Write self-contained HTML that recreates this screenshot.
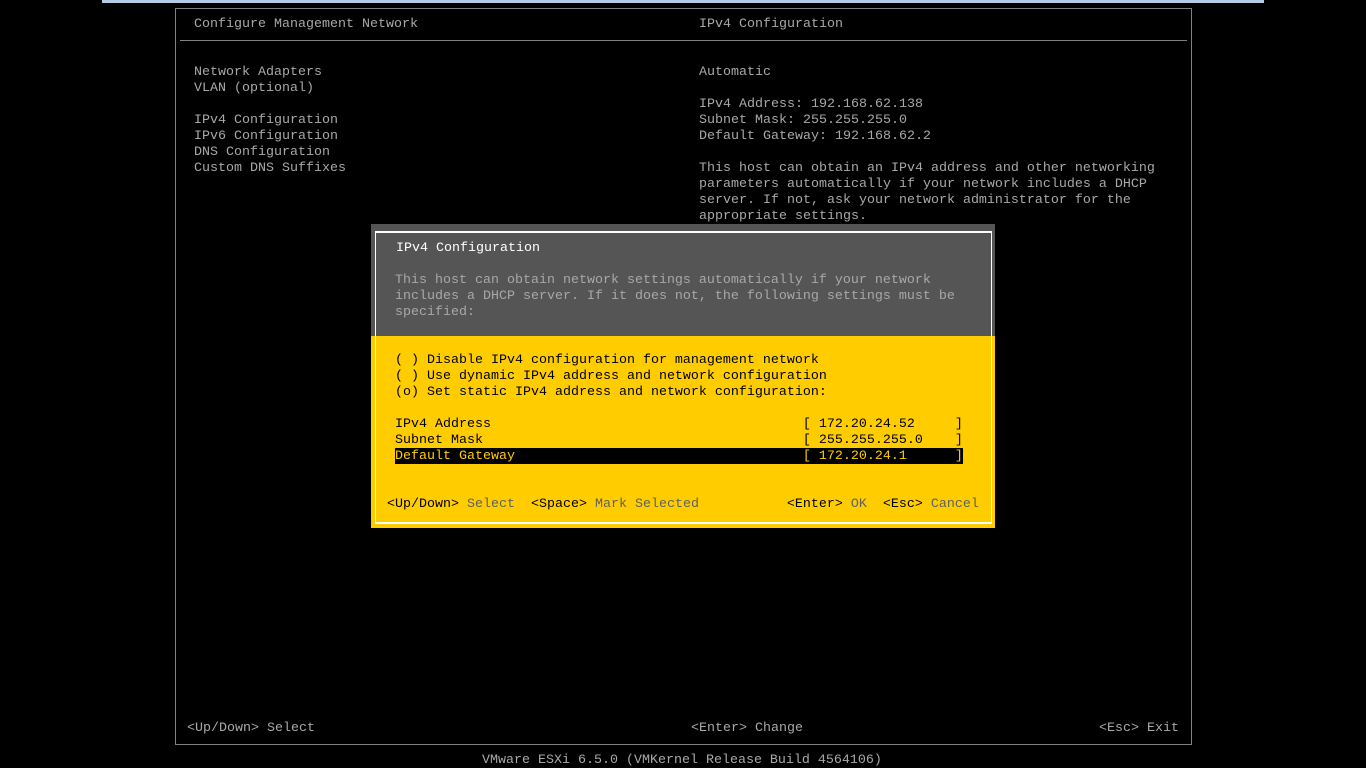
<!DOCTYPE html>
<html><head><meta charset="utf-8"><style>
html,body{margin:0;padding:0;background:#000;width:1366px;height:768px;overflow:hidden}
body{position:relative;font-family:"Liberation Mono",monospace;font-size:13.33px;line-height:16px}
.t{position:absolute;white-space:pre;color:#a8a8a8}
.w{color:#fff}.k{color:#000}.g{color:#606060}
.abs{position:absolute}
</style></head><body>
<div class="abs" style="left:102px;top:0;width:1162px;height:3px;background:#b4cbe6"></div>
<div class="abs" style="left:175px;top:8px;width:1015px;height:735px;border:1px solid #808080"></div>
<div class="abs" style="left:180px;top:40px;width:1007px;height:1px;background:#808080"></div>

<div class="t" style="left:194px;top:17px">Configure Management Network</div>
<div class="t" style="left:699px;top:17px">IPv4 Configuration</div>
<div class="t" style="left:194px;top:65px">Network Adapters
VLAN (optional)

IPv4 Configuration
IPv6 Configuration
DNS Configuration
Custom DNS Suffixes</div>
<div class="t" style="left:699px;top:65px">Automatic

IPv4 Address: 192.168.62.138
Subnet Mask: 255.255.255.0
Default Gateway: 192.168.62.2

This host can obtain an IPv4 address and other networking
parameters automatically if your network includes a DHCP
server. If not, ask your network administrator for the
appropriate settings.</div>
<div class="t" style="left:187px;top:721px">&lt;Up/Down&gt; Select</div>
<div class="t" style="left:691px;top:721px">&lt;Enter&gt; Change</div>
<div class="t" style="left:1099px;top:721px">&lt;Esc&gt; Exit</div>
<div class="t" style="left:482px;top:753px">VMware ESXi 6.5.0 (VMKernel Release Build 4564106)</div>

<div class="abs" style="left:371px;top:224px;width:624px;height:112px;background:#555"></div>
<div class="abs" style="left:371px;top:336px;width:624px;height:192px;background:#ffcc00"></div>
<div class="abs" style="left:375px;top:231px;width:615px;height:289px;border:1px solid #fff;border-top-width:2px;border-bottom-width:2px"></div>
<div class="t w" style="left:396px;top:241px">IPv4 Configuration</div>
<div class="t" style="left:395px;top:273px">This host can obtain network settings automatically if your network
includes a DHCP server. If it does not, the following settings must be
specified:</div>
<div class="t k" style="left:395px;top:353px">( ) Disable IPv4 configuration for management network
( ) Use dynamic IPv4 address and network configuration
(o) Set static IPv4 address and network configuration:

IPv4 Address                                       [ 172.20.24.52     ]
Subnet Mask                                        [ 255.255.255.0    ]</div>
<div class="abs" style="left:395px;top:448px;width:568px;height:16px;background:#000"></div>
<div class="t" style="left:395px;top:449px;color:#ffcc00">Default Gateway                                    [ 172.20.24.1      ]</div>
<div class="t k" style="left:387px;top:497px">&lt;Up/Down&gt; <span class="g">Select</span>  &lt;Space&gt; <span class="g">Mark Selected</span>           &lt;Enter&gt; <span class="g">OK</span>  &lt;Esc&gt; <span class="g">Cancel</span></div>
</body></html>
